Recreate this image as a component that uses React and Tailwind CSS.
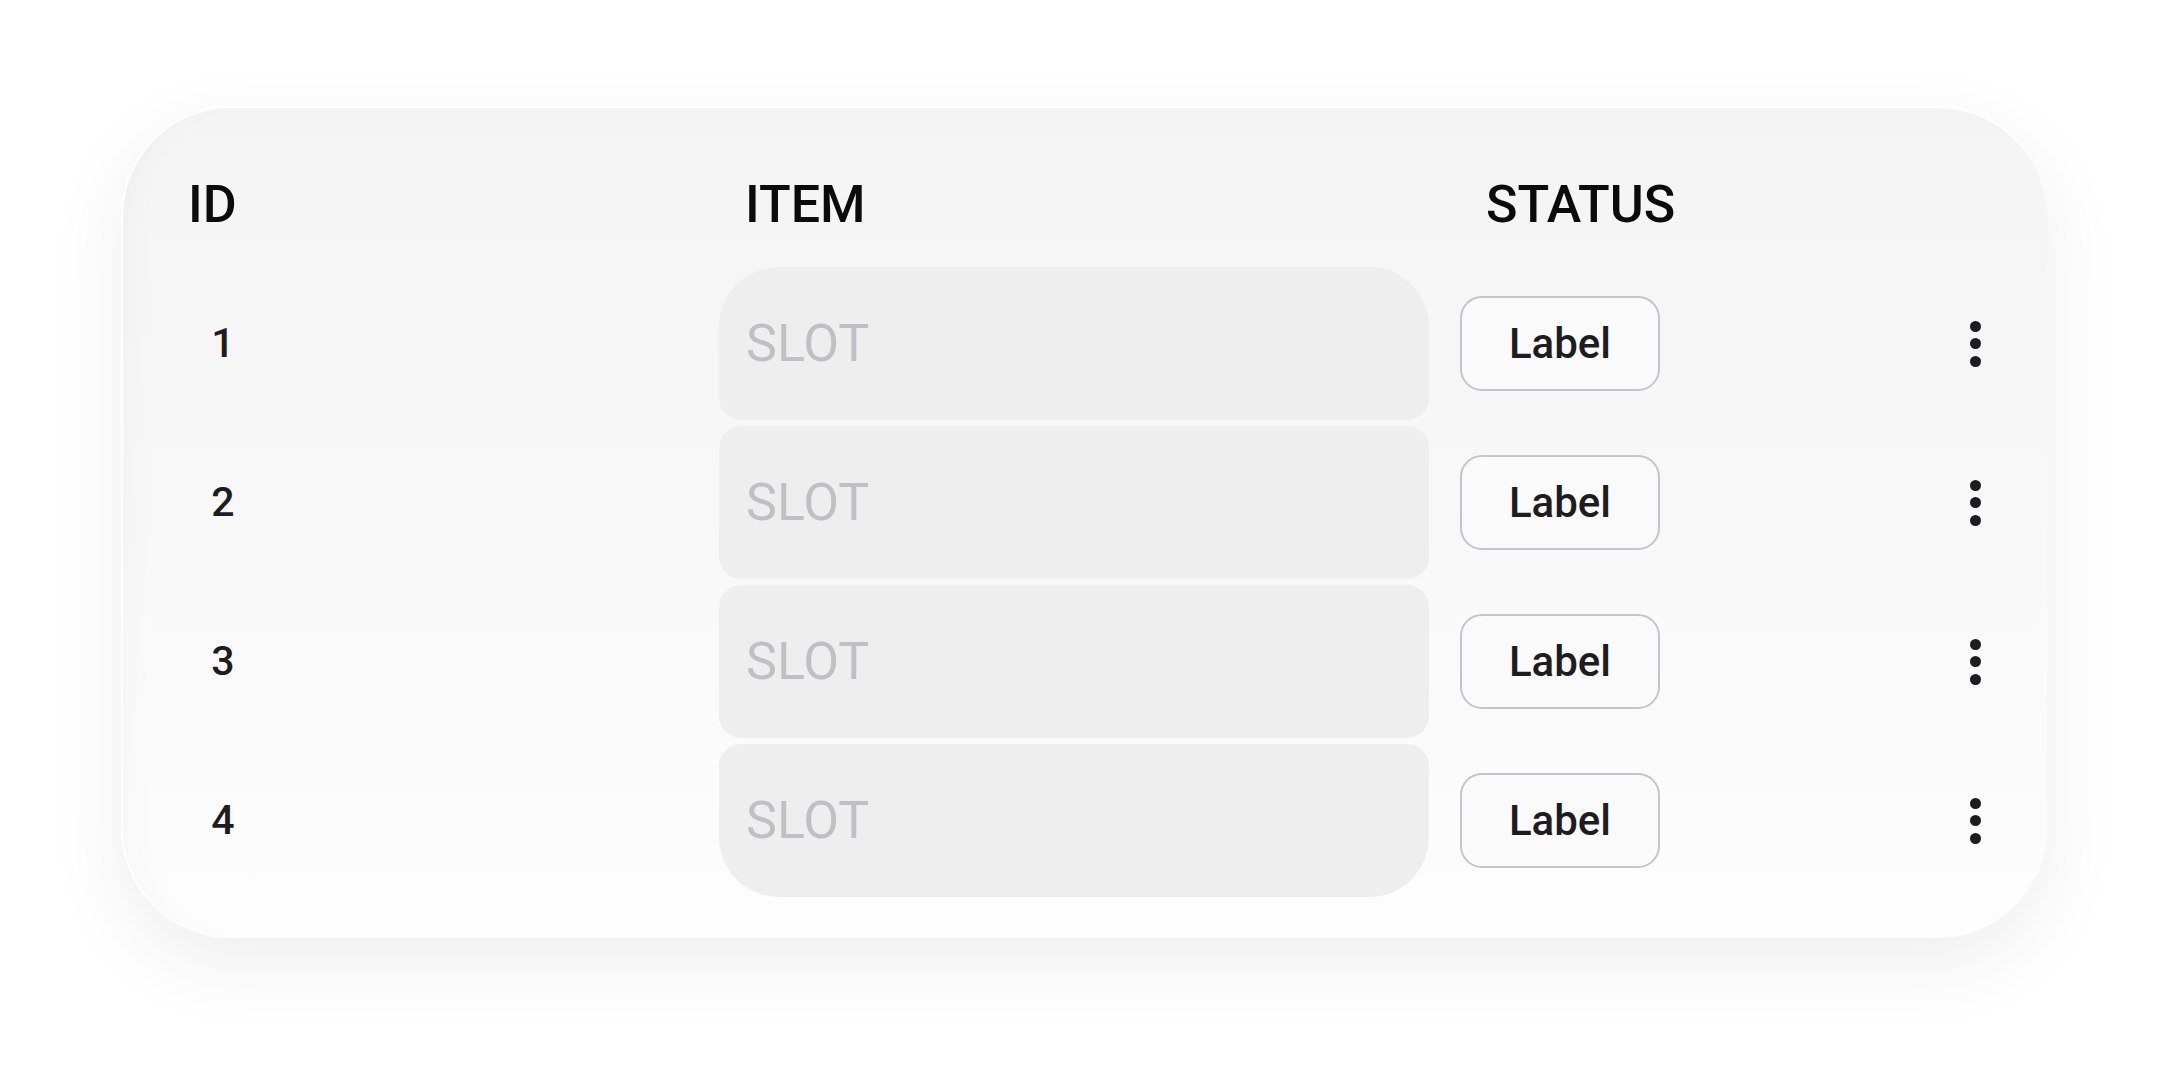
const rows = [1, 2, 3, 4];

function Kebab() {
  return (
    <div className="flex flex-col gap-[6.5px]">
      <span className="block h-[11px] w-[11px] rounded-full bg-[#1d1c21]" />
      <span className="block h-[11px] w-[11px] rounded-full bg-[#1d1c21]" />
      <span className="block h-[11px] w-[11px] rounded-full bg-[#1d1c21]" />
    </div>
  );
}

export default function App() {
  return (
    <div
      className="h-[1074px] w-full bg-white pl-[121px] pt-[106px]"
      style={{ fontFamily: "Roboto, 'Noto Sans', sans-serif" }}
    >
      <div className="h-[832px] w-[1926px] rounded-[110px] border-t-2 border-l-2 border-white bg-linear-to-b from-[#f4f4f4] via-[#f8f8f8] to-[#fdfdfd] pl-[39px] pr-[66px] pt-[67px] shadow-[0_26px_80px_rgba(0,0,0,0.07),inset_30px_0_40px_-30px_rgba(0,0,0,0.035)]">
        {/* header */}
        <div className="grid grid-cols-[526px_710px_200px_1fr] gap-x-[31px] text-[52px] font-medium leading-[60px] text-[#0b0b0c]">
          <div className="pl-[26px]">ID</div>
          <div className="pl-[26px]">ITEM</div>
          <div className="pl-[26px] whitespace-nowrap">STATUS</div>
          <div />
        </div>

        {/* rows */}
        <div className="mt-[32px] grid grid-cols-[526px_710px_200px_1fr] gap-x-[31px] gap-y-[6px]">
          {rows.map((n, i) => {
            const radius =
              i === 0
                ? "rounded-t-[60px] rounded-b-[22px]"
                : i === rows.length - 1
                ? "rounded-t-[22px] rounded-b-[60px]"
                : "rounded-[22px]";
            return [
              <div key={`id${n}`} className="flex h-[153px] w-[122px] items-center justify-center text-[41px] font-medium text-[#1d1c21]">
                {n}
              </div>,
              <div key={`slot${n}`} className={`flex h-[153px] items-center bg-[#eeeeee] pl-[27px] text-[52px] text-[#c1bfc6] ${radius}`}>
                SLOT
              </div>,
              <div key={`st${n}`} className="flex h-[153px] items-center">
                <div className="flex h-[95px] w-[200px] items-center justify-center rounded-[22px] border-2 border-[#c5c4ca] bg-[#fafafa] text-[42px] font-medium text-[#1d1c21]">
                  Label
                </div>
              </div>,
              <div key={`k${n}`} className="flex h-[153px] items-center justify-end">
                <Kebab />
              </div>,
            ];
          })}
        </div>
      </div>
    </div>
  );
}
